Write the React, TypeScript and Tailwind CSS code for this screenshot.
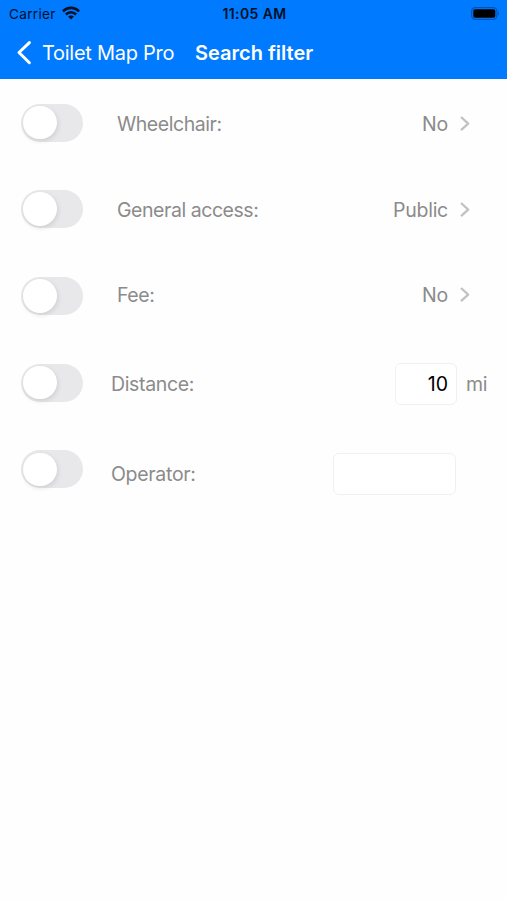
const BackIcon = () => (
  <svg width="16" height="26" viewBox="0 0 16 26" fill="none">
    <path
      d="M13.4 2.6 3 12.5l10.4 10.2"
      stroke="#fff"
      strokeWidth="3"
      strokeLinecap="round"
      strokeLinejoin="round"
    />
  </svg>
);

const WifiIcon = () => (
  <svg width="18" height="14" viewBox="0 0 18 14" fill="none" stroke="#001027" strokeWidth="2.7">
    <path d="M0.9 5.4C5.4 0.6 12.6 0.6 17.1 5.4" />
    <path d="M3.9 8.5C6.8 5.5 11.2 5.5 14.1 8.5" />
    <path d="M9 13.6 6.1 10.6C7.7 9 10.3 9 11.9 10.6Z" fill="#001027" stroke="none" />
  </svg>
);

const BatteryIcon = () => (
  <svg width="29" height="13" viewBox="0 0 29 13" fill="none">
    <rect x="0.7" y="0.7" width="25.2" height="11.6" rx="3.6" stroke="#0054b4" strokeWidth="1.2" />
    <rect x="2.3" y="2.3" width="22" height="8.4" rx="1.8" fill="#000" />
    <path d="M27 4.5c1.3 0.4 1.3 3.6 0 4Z" fill="#0054b4" />
  </svg>
);

const Chevron = () => (
  <svg width="12" height="18" viewBox="0 0 12 18" fill="none">
    <path d="M2 2 9.2 8.6 2 15.2" stroke="#c2c2c5" strokeWidth="2.3" strokeLinejoin="round" />
  </svg>
);

const Toggle = ({ label }: { label: string }) => (
  <button
    type="button"
    role="switch"
    aria-checked="false"
    aria-label={label}
    className="h-[38px] w-[62px] rounded-full bg-[#e8e8eb] p-[2px]"
  >
    <span className="block size-[33.5px] rounded-full bg-white shadow-[1px_2px_5px_rgba(0,0,0,0.11)]" />
  </button>
);

const StatusBar = () => (
  <div className="grid h-[27px] grid-cols-3 items-center pl-[9px] pr-[7px] text-[13.6px] text-[#001027]">
    <div className="flex items-center gap-[6px]">
      <span className="pt-px tracking-[0.3px]">Carrier</span>
      <WifiIcon />
    </div>
    <span className="text-center text-[14px] font-semibold tracking-[0.4px]">11:05 AM</span>
    <div className="flex justify-end">
      <BatteryIcon />
    </div>
  </div>
);

const options = [
  { label: "Wheelchair:", value: "No", height: "h-[86px]" },
  { label: "General access:", value: "Public", height: "h-[85px]" },
  { label: "Fee:", value: "No", height: "h-[86px]" },
];

const toggles = ["Wheelchair", "General access", "Fee", "Distance", "Operator"];

export default function App() {
  return (
    <div className="h-[900px] w-[507px] overflow-hidden bg-[#fefefe] font-['Inter','Liberation_Sans',sans-serif] text-[19.5px] text-[#8b8b8b]">
      <header className="h-[79px] bg-[#007aff]">
        <StatusBar />
        <nav className="flex h-[51px] items-center pl-4 text-[20px] text-white">
          <BackIcon />
          <span className="ml-[10px] w-[133px] whitespace-nowrap tracking-[-0.27px]">Toilet Map Pro</span>
          <h1 className="ml-[20px] whitespace-nowrap font-semibold">Search filter</h1>
        </nav>
      </header>
      <main className="flex">
        <div className="flex flex-col gap-[48.7px] pl-[21px] pt-[24.5px]">
          {toggles.map((name) => (
            <Toggle key={name} label={name} />
          ))}
        </div>
        <div className="flex-1 pt-[2px]">
          {options.map(({ label, value, height }) => (
            <div key={label} className={`flex items-center pl-[34px] pr-[36px] ${height}`}>
              <span className="pt-[2px] tracking-[-0.45px]">{label}</span>
              <span className="ml-auto mr-[11px] pt-[2px] tracking-[-0.25px]">{value}</span>
              <Chevron />
            </div>
          ))}
          <div className="flex h-[92px] items-center pl-[28px] pr-[20px]">
            <span className="pt-[2px] tracking-[-0.35px]">Distance:</span>
            <input
              aria-label="Distance"
              defaultValue="10"
              className="ml-auto mr-[9px] h-[42px] w-[62px] rounded-md border border-[#f0f0f0] bg-white pr-2 text-right text-black"
            />
            <span className="pt-[2px] tracking-[-0.4px]">mi</span>
          </div>
          <div className="flex h-[88px] items-center pl-[28px] pr-[51px]">
            <span className="pt-[2px] tracking-[-0.3px]">Operator:</span>
            <input
              aria-label="Operator"
              className="ml-auto h-[42px] w-[123px] rounded-md border border-[#f0f0f0] bg-white px-2 text-black"
            />
          </div>
        </div>
      </main>
    </div>
  );
}
